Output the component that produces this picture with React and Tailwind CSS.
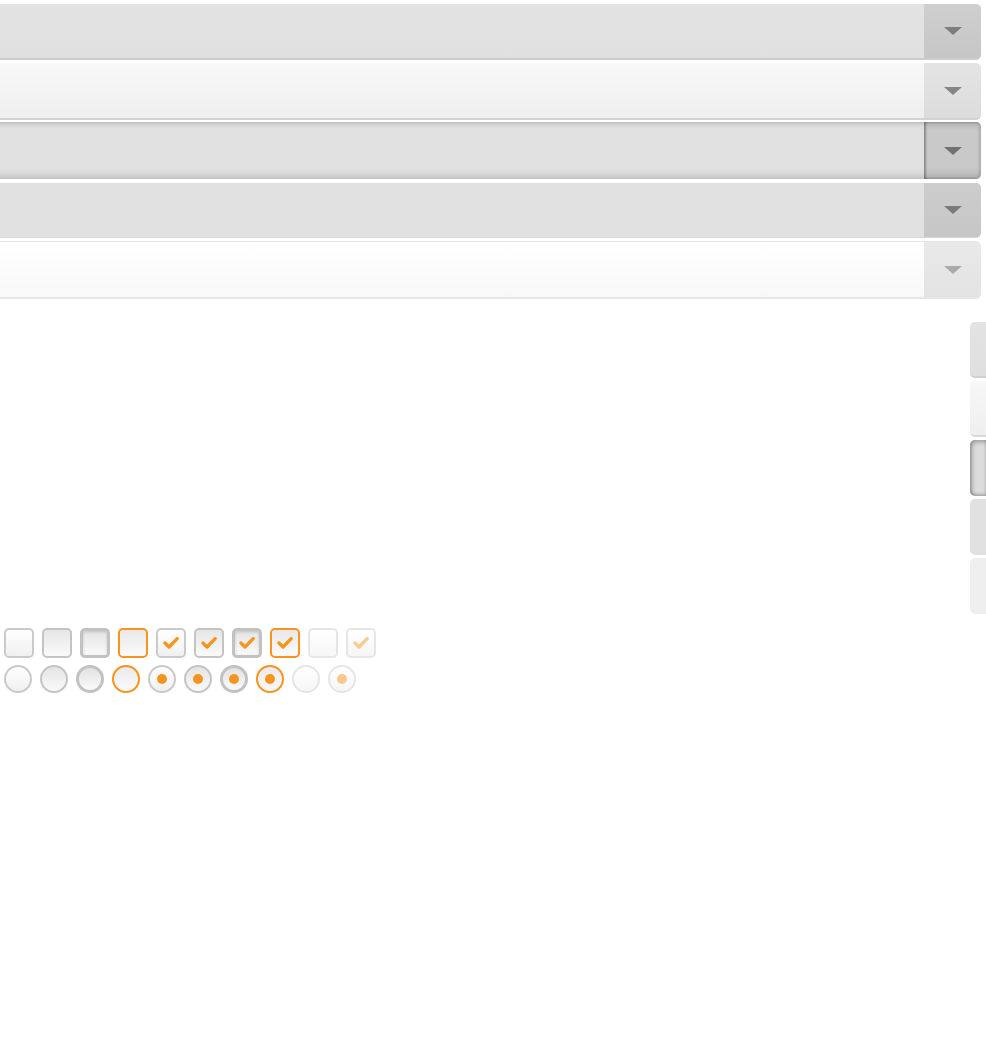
import React from "react";

const bars = [
  {
    body: "bg-[linear-gradient(#e3e3e3,#e0e0e0)] border-b-2 border-[#cdcdcd]",
    arrow: "bg-[linear-gradient(#cfcfcf,#c6c6c6)]",
    tri: "border-t-[#7d7d7d]",
    h: "h-[56px]",
  },
  {
    body: "mt-[3px] bg-[linear-gradient(#f8f8f8,#efefef)] border-b-2 border-[#d2d2d2]",
    arrow: "bg-[linear-gradient(#e4e4e4,#dcdcdc)]",
    tri: "border-t-[#858585]",
    h: "h-[57px]",
  },
  {
    body: "mt-[2px] bg-[linear-gradient(#bdbdbd,#d6d6d6_3px,#e1e1e1_7px,#e1e1e1_47px,#d4d4d4_53px,#c2c2c2)]",
    arrow: "bg-[linear-gradient(#a9a9a9,#bfbfbf_4px,#c9c9c9_8px,#c9c9c9_46px,#bdbdbd_52px,#a8a8a8)] shadow-[inset_2px_0_2px_rgba(0,0,0,0.3),inset_-2px_0_3px_rgba(0,0,0,0.15)]",
    tri: "border-t-[#727272]",
    h: "h-[57px]",
  },
  {
    body: "mt-[4px] bg-[#e1e1e1] border-b border-[#d6d6d6]",
    arrow: "bg-[linear-gradient(#cdcdcd,#c6c6c6)]",
    tri: "border-t-[#7a7a7a]",
    h: "h-[55px]",
  },
  {
    body: "mt-[3px] bg-[linear-gradient(#ffffff,#f8f8f8)] border-t border-b-2 border-[#e6e6e6]",
    arrow: "bg-[linear-gradient(#e9e9e9,#e3e3e3)]",
    tri: "border-t-[#aaaaaa]",
    h: "h-[58px]",
  },
];

const tabs = [
  "bg-[linear-gradient(#e3e3e3,#dfdfdf)] border-b-2 border-[#d0d0d0]",
  "bg-[linear-gradient(#f7f7f7,#efefef)] border-b-2 border-[#d8d8d8]",
  "bg-[#dcdcdc] shadow-[inset_2px_2px_4px_rgba(0,0,0,0.3),inset_0_-2px_3px_rgba(0,0,0,0.2)]",
  "bg-[#e1e1e1]",
  "bg-[#efefef]",
];

const Check = ({ color = "#f7941d" }) => (
  <svg width="16" height="12" viewBox="0 0 16 12">
    <path d="M2 6 L6 10 L14.2 1.6" fill="none" stroke={color} strokeWidth="3.3" strokeLinecap="round" strokeLinejoin="round" />
  </svg>
);

const boxStates = [
  { cls: "border-2 border-[#cacaca] bg-[linear-gradient(#ffffff,#f0f0f0)]" },
  { cls: "border-2 border-[#c4c4c4] bg-[linear-gradient(#e6e6e6,#fafafa)]" },
  { cls: "border-[3px] border-[#c2c2c2] bg-[linear-gradient(#e4e4e4,#fafafa)] shadow-[inset_0_1px_3px_rgba(0,0,0,0.15)]" },
  { cls: "border-2 border-[#f7941d] bg-[linear-gradient(#e8e8e8,#fbfbfb)]" },
  { cls: "border-2 border-[#cacaca] bg-[linear-gradient(#ffffff,#f0f0f0)]", check: true },
  { cls: "border-2 border-[#c4c4c4] bg-[linear-gradient(#e6e6e6,#fafafa)]", check: true },
  { cls: "border-[3px] border-[#c2c2c2] bg-[linear-gradient(#e4e4e4,#fafafa)] shadow-[inset_0_1px_3px_rgba(0,0,0,0.15)]", check: true },
  { cls: "border-2 border-[#f7941d] bg-[linear-gradient(#e8e8e8,#fbfbfb)]", check: true },
  { cls: "border-2 border-[#e6e6e6] bg-[linear-gradient(#ffffff,#f6f6f6)]" },
  { cls: "border-2 border-[#e6e6e6] bg-[linear-gradient(#ffffff,#f6f6f6)]", check: true, light: true },
];

const radioStates = [
  { cls: "border-2 border-[#cacaca] bg-[linear-gradient(#ffffff,#f0f0f0)]" },
  { cls: "border-2 border-[#c4c4c4] bg-[linear-gradient(#e4e4e4,#fafafa)]" },
  { cls: "border-[3px] border-[#c2c2c2] bg-[linear-gradient(#e2e2e2,#fafafa)]" },
  { cls: "border-2 border-[#f7941d] bg-[linear-gradient(#eaeaea,#fbfbfb)]" },
  { cls: "border-2 border-[#cacaca] bg-[linear-gradient(#ffffff,#f0f0f0)]", dot: "bg-[#f7941d]" },
  { cls: "border-2 border-[#c4c4c4] bg-[linear-gradient(#e4e4e4,#fafafa)]", dot: "bg-[#f7941d]" },
  { cls: "border-[3px] border-[#c2c2c2] bg-[linear-gradient(#e2e2e2,#fafafa)]", dot: "bg-[#f7941d]" },
  { cls: "border-2 border-[#f7941d] bg-[linear-gradient(#eaeaea,#fbfbfb)]", dot: "bg-[#f7941d]" },
  { cls: "border-2 border-[#e6e6e6] bg-[linear-gradient(#ffffff,#f6f6f6)]" },
  { cls: "border-2 border-[#e6e6e6] bg-[linear-gradient(#ffffff,#f6f6f6)]", dot: "bg-[#f9c98b]" },
];

const App = () => {
  return (
    <div className="min-h-screen bg-white w-[986px] overflow-hidden pt-1">
      {/* select bars */}
      <div className="flex flex-col w-[981px]">
        {bars.map((b, i) => (
          <div key={i} className={`${b.h} flex rounded-r-[5px] overflow-hidden ${b.body}`}>
            <div className="flex-1" />
            <div className={`w-[57px] h-full flex items-center justify-center ${b.arrow}`}>
              <div className={`w-0 h-0 border-l-[9px] border-r-[9px] border-t-[8px] border-l-transparent border-r-transparent ${b.tri}`} />
            </div>
          </div>
        ))}
      </div>

      {/* side tabs */}
      <div className="mt-[23px] flex flex-col items-end gap-[3px]">
        {tabs.map((t, i) => (
          <div key={i} className={`w-[16px] h-[56px] rounded-l-[5px] ${t}`} />
        ))}
      </div>

      {/* checkboxes */}
      <div className="mt-[14px] pl-1 flex gap-[8px]">
        {boxStates.map((s, i) => (
          <div key={i} className={`w-[30px] h-[30px] rounded-[5px] flex items-center justify-center ${s.cls}`}>
            {s.check && <Check color={s.light ? "#f9cb8e" : "#f7941d"} />}
          </div>
        ))}
      </div>

      {/* radios */}
      <div className="mt-[7px] pl-1 flex gap-[8px]">
        {radioStates.map((s, i) => (
          <div key={i} className={`w-[28px] h-[28px] rounded-full flex items-center justify-center ${s.cls}`}>
            {s.dot && <div className={`w-[10px] h-[10px] rounded-full ${s.dot}`} />}
          </div>
        ))}
      </div>
    </div>
  );
};

export default App;
